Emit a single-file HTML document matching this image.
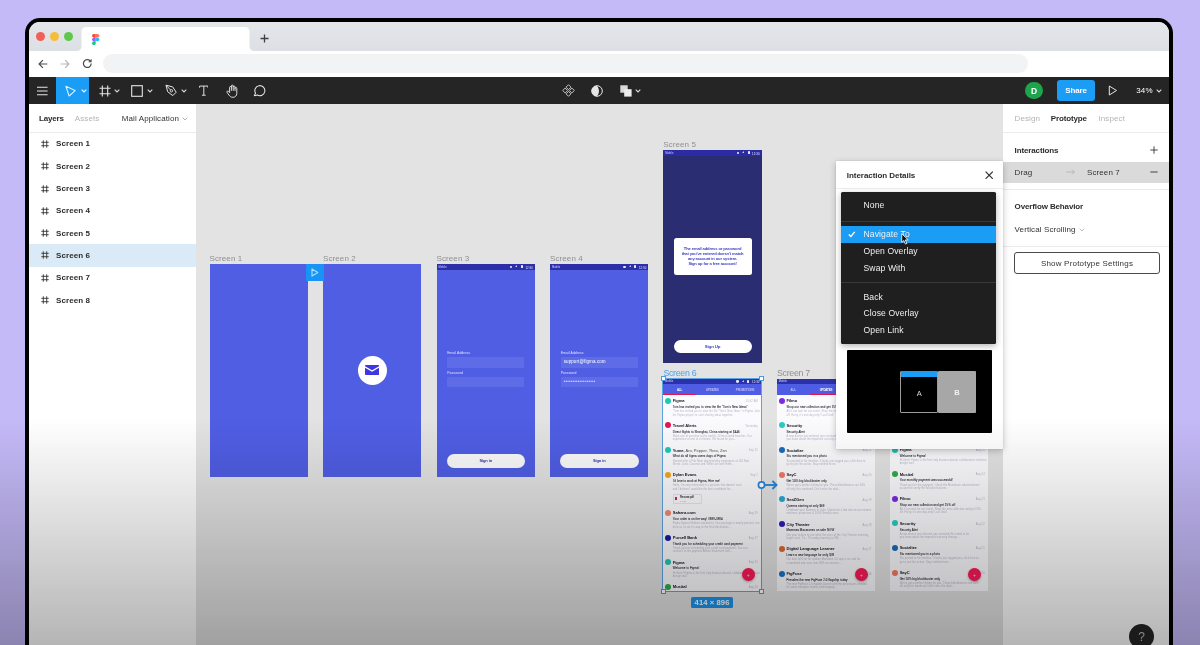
<!DOCTYPE html>
<html lang="en">
<head>
<meta charset="utf-8">
<title>Figma prototype - Mail Application</title>
<style>
*{box-sizing:border-box;margin:0;padding:0}
html,body{width:1200px;height:645px;overflow:hidden;background:#c5baf8}
body{font-family:"Liberation Sans",sans-serif;position:relative;color:#222}
.abs{position:absolute}
.t{position:absolute;white-space:nowrap;line-height:12px;height:12px;margin-top:-5.5px;font-size:8px;color:#333;letter-spacing:0.1px}
.b{font-weight:bold;letter-spacing:-0.13px}
#win{position:absolute;left:25px;top:18px;width:1148px;height:700px;background:#000;border-radius:15px}
#inner{position:absolute;left:3.5px;top:4px;width:1140.5px;height:690px;background:#fff;border-radius:11px 11px 0 0;overflow:hidden}
/* everything inside #app is positioned in page coordinates */
#app{position:absolute;left:-28.5px;top:-22px;width:1200px;height:700px;will-change:transform}
#tabbar{left:28px;top:22px;width:1142px;height:29px;background:linear-gradient(#e4e6ea,#dcdfe4)}
#tab{left:81px;top:27px;width:169px;height:24px;background:#fff;border-radius:5px 5px 0 0}
.tl{position:absolute;top:32.3px;width:9px;height:9px;border-radius:50%}
#addr{left:28px;top:51px;width:1142px;height:26px;background:#fff}
#pill{left:103px;top:54.2px;width:925px;height:18.8px;border-radius:9.5px;background:#f1f3f4}
#toolbar{left:28px;top:76.7px;width:1142px;height:27.8px;background:#252525}
#move{left:55.7px;top:76.7px;width:33.5px;height:27.8px;background:#1b9cf5}
#left{left:28px;top:103px;width:167.5px;height:560px;background:#fff}
#canvas{left:195.5px;top:103px;width:808px;height:560px;background:#e3e3e3}
#right{left:1003px;top:103px;width:167px;height:560px;background:#fff}
.hl{position:absolute;background:#ebebeb;height:1px}
.lay{left:56px;font-weight:bold;color:#2c2c2c;font-size:8px}
.hash{position:absolute;left:40.5px;width:8px;height:8px}
.mi{left:863.500px;color:#f0f0f0;font-size:8.600px;margin-top:-6.200px}
.fl{color:#8f8f8f;font-size:8px}
.frame{position:absolute;overflow:hidden}
#shade{position:absolute;left:0;top:0;width:1200px;height:645px;pointer-events:none;
 background:linear-gradient(to bottom,rgba(0,0,0,0) 0,rgba(0,0,0,0) 418px,rgba(0,0,0,0.29) 645px)}
</style>
</head>
<body>
<div id="win"><div id="inner"><div id="app">

<!-- browser chrome -->
<div id="tabbar" class="abs"></div>
<svg class="abs" style="left:76px;top:27px" width="180" height="24" viewBox="0 0 180 24"><path d="M0 24Q5.500 24 5.500 19V5Q5.500 0 10.500 0H168.500Q173.500 0 173.500 5V19Q173.500 24 179 24z" fill="#fff"/></svg>
<div class="tl" style="left:36px;background:#f0605a"></div>
<div class="tl" style="left:50px;background:#f6bd3b"></div>
<div class="tl" style="left:64px;background:#5ec84d"></div>
<div id="addr" class="abs"></div>
<div id="pill" class="abs"></div>


<!-- panels -->
<div id="left" class="abs"></div>
<div id="canvas" class="abs"></div>
<div id="right" class="abs"></div>

<!-- figma toolbar -->
<div id="toolbar" class="abs"></div>
<div id="move" class="abs"></div>


<div class="abs" style="left:28px;top:244.200px;width:167.500px;height:22.400px;background:#daebf7"></div>
<div class="t b" style="left:38.900px;top:118.400px;color:#2c2c2c;font-size:8px">Layers</div>
<div class="t" style="left:74.800px;top:118.400px;color:#b3b3b3;font-size:8px">Assets</div>
<div class="t" style="left:121.800px;top:118.400px;color:#333;font-size:8px">Mail Application</div>
<svg class="abs" style="left:182.300px;top:117.200px" width="6" height="4" viewBox="0 0 6 4"><path d="M0.700 0.700L3 3l2.300-2.300" stroke="#9a9a9a" stroke-width="0.800" fill="none"/></svg>
<div class="hl" style="left:28px;top:132px;width:167.500px"></div>
<svg class="hash" style="top:139.9px" viewBox="0 0 8 8"><path d="M2.300 0.300v7.400M5.700 0.300v7.400M0.300 2.300h7.400M0.300 5.700h7.400" stroke="#333" stroke-width="0.900" fill="none"/></svg><div class="t lay" style="top:143.9px">Screen 1</div>
<svg class="hash" style="top:162.2px" viewBox="0 0 8 8"><path d="M2.300 0.300v7.400M5.700 0.300v7.400M0.300 2.300h7.400M0.300 5.700h7.400" stroke="#333" stroke-width="0.900" fill="none"/></svg><div class="t lay" style="top:166.2px">Screen 2</div>
<svg class="hash" style="top:184.5px" viewBox="0 0 8 8"><path d="M2.300 0.300v7.400M5.700 0.300v7.400M0.300 2.300h7.400M0.300 5.700h7.400" stroke="#333" stroke-width="0.900" fill="none"/></svg><div class="t lay" style="top:188.5px">Screen 3</div>
<svg class="hash" style="top:206.8px" viewBox="0 0 8 8"><path d="M2.300 0.300v7.400M5.700 0.300v7.400M0.300 2.300h7.400M0.300 5.700h7.400" stroke="#333" stroke-width="0.900" fill="none"/></svg><div class="t lay" style="top:210.8px">Screen 4</div>
<svg class="hash" style="top:229.1px" viewBox="0 0 8 8"><path d="M2.300 0.300v7.400M5.700 0.300v7.400M0.300 2.300h7.400M0.300 5.700h7.400" stroke="#333" stroke-width="0.900" fill="none"/></svg><div class="t lay" style="top:233.1px">Screen 5</div>
<svg class="hash" style="top:251.4px" viewBox="0 0 8 8"><path d="M2.300 0.300v7.400M5.700 0.300v7.400M0.300 2.300h7.400M0.300 5.700h7.400" stroke="#333" stroke-width="0.900" fill="none"/></svg><div class="t lay" style="top:255.4px">Screen 6</div>
<svg class="hash" style="top:273.7px" viewBox="0 0 8 8"><path d="M2.300 0.300v7.400M5.700 0.300v7.400M0.300 2.300h7.400M0.300 5.700h7.400" stroke="#333" stroke-width="0.900" fill="none"/></svg><div class="t lay" style="top:277.7px">Screen 7</div>
<svg class="hash" style="top:296.0px" viewBox="0 0 8 8"><path d="M2.300 0.300v7.400M5.700 0.300v7.400M0.300 2.300h7.400M0.300 5.700h7.400" stroke="#333" stroke-width="0.900" fill="none"/></svg><div class="t lay" style="top:300.0px">Screen 8</div>

<!--CANVAS-->
<div class="t fl" style="left:209.5px;top:258.8px;color:#8f8f8f;font-size:8px">Screen 1</div>
<div class="frame" style="left:209.500px;top:264.200px;width:98.300px;height:213px;background:#505ee4"></div>
<div class="t fl" style="left:323px;top:258.8px;color:#8f8f8f;font-size:8px">Screen 2</div>
<div class="frame" style="left:323px;top:264.200px;width:98.400px;height:213px;background:#505ee4"><div class="abs" style="left:34.500px;top:91.400px;width:29px;height:29px;border-radius:50%;background:#fff"></div><svg class="abs" style="left:41.900px;top:101.200px" width="14.200" height="10" viewBox="0 0 14.200 10"><rect x="0" y="0" width="14.200" height="10" rx="0.800" fill="#3d36e2"/><path d="M-0.200 1.800l7.300 4.300 7.300-4.300" stroke="#fff" stroke-width="1.300" fill="none"/></svg></div>
<div class="abs" style="left:306.300px;top:264.200px;width:17.500px;height:16.800px;background:#1a93f6"></div><svg class="abs" style="left:311.300px;top:268.300px" width="8" height="9" viewBox="0 0 8 9"><path d="M1 0.900l5.800 3.600L1 8.100z" stroke="#9fe4ff" stroke-width="1.150" fill="none" stroke-linejoin="round"/></svg>
<div class="t fl" style="left:436.5px;top:258.8px;color:#8f8f8f;font-size:8px">Screen 3</div>
<div class="frame" style="left:436.5px;top:264.200px;width:98.4px;height:213px;background:#505ee4"><div class="abs" style="left:0;top:0;width:98.4px;height:5.600px;background:#2c2fa6"></div><div class="t" style="left:2px;top:3.400px;font-size:2.600px;color:#d5d8ff;line-height:4px;height:4px;margin-top:-2px">Mobile</div><div class="t" style="left:88.9px;top:3.400px;font-size:2.800px;color:#e8eaff;line-height:4px;height:4px;margin-top:-2px">12:30</div><div class="abs" style="left:73.4px;top:1.500px;width:2.600px;height:2.400px;background:#e8eaff;border-radius:50% 50% 50% 50%/40% 40% 60% 60%"></div><div class="abs" style="left:78.9px;top:1.300px;width:0;height:0;border-left:2.800px solid transparent;border-bottom:2.800px solid #c9ccff"></div><div class="abs" style="left:84.4px;top:1.200px;width:2px;height:3px;background:#e8eaff;border-radius:0.400px"></div><div class="t" style="left:10.7px;top:89px;font-size:3.400px;color:#dfe2ff;line-height:4px;height:4px;margin-top:-2px">Email Address</div><div class="abs" style="left:10.7px;top:92.800px;width:77px;height:10.600px;background:#5f6ce7;border-radius:0.800px"></div><div class="t" style="left:10.7px;top:108.900px;font-size:3.400px;color:#dfe2ff;line-height:4px;height:4px;margin-top:-2px">Password</div><div class="abs" style="left:10.7px;top:113px;width:77px;height:10.200px;background:#5f6ce7;border-radius:0.800px"></div><div class="abs" style="left:10px;top:189.400px;width:78.500px;height:14px;border-radius:7px;background:#fafafa"></div><div class="t b" style="left:10px;top:197.100px;width:78.500px;text-align:center;font-size:4px;color:#2f33a8;line-height:6px;height:6px;margin-top:-3px">Sign in</div></div>
<div class="t fl" style="left:550px;top:258.8px;color:#8f8f8f;font-size:8px">Screen 4</div>
<div class="frame" style="left:550px;top:264.200px;width:98.4px;height:213px;background:#505ee4"><div class="abs" style="left:0;top:0;width:98.4px;height:5.600px;background:#2c2fa6"></div><div class="t" style="left:2px;top:3.400px;font-size:2.600px;color:#d5d8ff;line-height:4px;height:4px;margin-top:-2px">Mobile</div><div class="t" style="left:88.9px;top:3.400px;font-size:2.800px;color:#e8eaff;line-height:4px;height:4px;margin-top:-2px">12:30</div><div class="abs" style="left:73.4px;top:1.500px;width:2.600px;height:2.400px;background:#e8eaff;border-radius:50% 50% 50% 50%/40% 40% 60% 60%"></div><div class="abs" style="left:78.9px;top:1.300px;width:0;height:0;border-left:2.800px solid transparent;border-bottom:2.800px solid #c9ccff"></div><div class="abs" style="left:84.4px;top:1.200px;width:2px;height:3px;background:#e8eaff;border-radius:0.400px"></div><div class="t" style="left:10.7px;top:89px;font-size:3.400px;color:#dfe2ff;line-height:4px;height:4px;margin-top:-2px">Email Address</div><div class="abs" style="left:10.7px;top:92.800px;width:77px;height:10.600px;background:#5f6ce7;border-radius:0.800px"></div><div class="t" style="left:10.7px;top:108.900px;font-size:3.400px;color:#dfe2ff;line-height:4px;height:4px;margin-top:-2px">Password</div><div class="abs" style="left:10.7px;top:113px;width:77px;height:10.200px;background:#5f6ce7;border-radius:0.800px"></div><div class="t" style="left:13.7px;top:98.200px;font-size:4.500px;color:#fff;line-height:6px;height:6px;margin-top:-3px">support@figma.com</div><div class="t" style="left:13.7px;top:118.200px;font-size:2.600px;color:#eef;line-height:4px;height:4px;margin-top:-2px;letter-spacing:0.200px">●●●●●●●●●●●●●●●●●●</div><div class="abs" style="left:10px;top:189.400px;width:78.500px;height:14px;border-radius:7px;background:#fafafa"></div><div class="t b" style="left:10px;top:197.100px;width:78.500px;text-align:center;font-size:4px;color:#2f33a8;line-height:6px;height:6px;margin-top:-3px">Sign in</div></div>
<div class="t fl" style="left:663.2px;top:144.4px;color:#8f8f8f;font-size:8px">Screen 5</div>
<div class="frame" style="left:663.200px;top:150.200px;width:98.400px;height:213px;background:#2a2d72"><div class="abs" style="left:0;top:0;width:98.4px;height:5.600px;background:#2b2ba4"></div><div class="t" style="left:2px;top:3.400px;font-size:2.600px;color:#d5d8ff;line-height:4px;height:4px;margin-top:-2px">Mobile</div><div class="t" style="left:88.9px;top:3.400px;font-size:2.800px;color:#e8eaff;line-height:4px;height:4px;margin-top:-2px">12:30</div><div class="abs" style="left:73.4px;top:1.500px;width:2.600px;height:2.400px;background:#e8eaff;border-radius:50% 50% 50% 50%/40% 40% 60% 60%"></div><div class="abs" style="left:78.9px;top:1.300px;width:0;height:0;border-left:2.800px solid transparent;border-bottom:2.800px solid #c9ccff"></div><div class="abs" style="left:84.4px;top:1.200px;width:2px;height:3px;background:#e8eaff;border-radius:0.400px"></div><div class="abs" style="left:10.400px;top:87.800px;width:78px;height:37.200px;border-radius:2.500px;background:#fff"></div><div class="t b" style="left:10.400px;top:98.90px;width:78px;text-align:center;font-size:4.100px;color:#3c40c4;line-height:6px;height:6px;margin-top:-3px">The email address or password</div><div class="t b" style="left:10.400px;top:103.95px;width:78px;text-align:center;font-size:4.100px;color:#3c40c4;line-height:6px;height:6px;margin-top:-3px">that you've entered doesn't match</div><div class="t b" style="left:10.400px;top:109.00px;width:78px;text-align:center;font-size:4.100px;color:#3c40c4;line-height:6px;height:6px;margin-top:-3px">any account in our system.</div><div class="t b" style="left:10.400px;top:114.05px;width:78px;text-align:center;font-size:4.100px;color:#3c40c4;line-height:6px;height:6px;margin-top:-3px">Sign up for a free account!</div><div class="abs" style="left:10.400px;top:189.600px;width:78px;height:13.700px;border-radius:7px;background:#fff"></div><div class="t b" style="left:10.400px;top:196.500px;width:78px;text-align:center;font-size:4.400px;color:#3c40c4;line-height:6px;height:6px;margin-top:-3px">Sign Up</div></div>
<div class="t fl" style="left:663.4px;top:372.6px;color:#49a2ee;font-size:8.8px;letter-spacing:-0.28px">Screen 6</div>
<div class="frame" style="left:663.100px;top:378.800px;width:98.400px;height:212.500px;background:#fbfbfe"><div class="abs" style="left:0;top:0;width:98.4px;height:5.600px;background:#2b31ab"></div><div class="t" style="left:2px;top:3.400px;font-size:2.600px;color:#d5d8ff;line-height:4px;height:4px;margin-top:-2px">Mobile</div><div class="t" style="left:88.9px;top:3.400px;font-size:2.800px;color:#e8eaff;line-height:4px;height:4px;margin-top:-2px">12:30</div><div class="abs" style="left:73.4px;top:1.500px;width:2.600px;height:2.400px;background:#e8eaff;border-radius:50% 50% 50% 50%/40% 40% 60% 60%"></div><div class="abs" style="left:78.9px;top:1.300px;width:0;height:0;border-left:2.800px solid transparent;border-bottom:2.800px solid #c9ccff"></div><div class="abs" style="left:84.4px;top:1.200px;width:2px;height:3px;background:#e8eaff;border-radius:0.400px"></div><div class="abs" style="left:0;top:5.500px;width:98.4px;height:10.400px;background:#4f5de4"></div><div class="t b" style="left:0.0px;top:10.800px;width:32.8px;text-align:center;font-size:2.900px;color:#fff;line-height:4px;height:4px;margin-top:-2px">ALL</div><div class="t b" style="left:32.8px;top:10.800px;width:32.8px;text-align:center;font-size:2.900px;color:#b9c0ff;line-height:4px;height:4px;margin-top:-2px">UPDATES</div><div class="t b" style="left:65.6px;top:10.800px;width:32.8px;text-align:center;font-size:2.900px;color:#b9c0ff;line-height:4px;height:4px;margin-top:-2px">PROMOTIONS</div><div class="abs" style="left:0.0px;top:15.400px;width:32.8px;height:1.300px;background:#e3174f"></div><div class="abs" style="left:2px;top:19.1px;width:6px;height:6px;border-radius:50%;background:#22c7b4"></div><div class="t b" style="left:9.7px;top:22.6px;font-size:4.1px;color:#16161e;line-height:6px;height:6px;margin-top:-3px;letter-spacing:-0.05px">Figma</div><div class="t" style="right:3.6px;top:23.4px;font-size:2.7px;color:#b7b7c8;line-height:4px;height:4px;margin-top:-2px">10:42 AM</div><div class="t" style="left:9.7px;top:28.2px;font-size:2.9px;color:#1e1e28;line-height:4px;height:4px;margin-top:-2px;-webkit-text-stroke:0.06px #1e1e28">Tom has invited you to view the file "Tom's New Ideas"</div><div class="t" style="left:9.7px;top:33.6px;font-size:2.6px;color:#b4b4c6;line-height:4px;height:4px;margin-top:-2px">"Tom has invited you to view the file "Tom's New Ideas" in Figma. Join</div><div class="t" style="left:9.7px;top:36.8px;font-size:2.6px;color:#b4b4c6;line-height:4px;height:4px;margin-top:-2px">his Figma project to start sharing ideas together.</div><div class="abs" style="left:2px;top:43.7px;width:6px;height:6px;border-radius:50%;background:#e3174f"></div><div class="t b" style="left:9.7px;top:47.2px;font-size:4.1px;color:#16161e;line-height:6px;height:6px;margin-top:-3px;letter-spacing:-0.05px">Travel Alerts</div><div class="t" style="right:3.6px;top:48.0px;font-size:2.7px;color:#b7b7c8;line-height:4px;height:4px;margin-top:-2px">Yesterday</div><div class="t" style="left:9.7px;top:52.8px;font-size:2.9px;color:#1e1e28;line-height:4px;height:4px;margin-top:-2px;-webkit-text-stroke:0.06px #1e1e28">Direct flights to Shanghai, China starting at $446</div><div class="t" style="left:9.7px;top:58.2px;font-size:2.6px;color:#b4b4c6;line-height:4px;height:4px;margin-top:-2px">Make use of vacation to the world's 10 best-loved beaches. Our</div><div class="t" style="left:9.7px;top:61.4px;font-size:2.6px;color:#b4b4c6;line-height:4px;height:4px;margin-top:-2px">experience of one of a lifetime. We found for you...</div><div class="abs" style="left:2px;top:68.3px;width:6px;height:6px;border-radius:50%;background:#22c7b4"></div><div class="t b" style="left:9.7px;top:71.8px;font-size:4.1px;color:#16161e;line-height:6px;height:6px;margin-top:-3px;letter-spacing:-0.05px">Yume,<span style="font-weight:normal;color:#555"> Aro, Pepper, Theo, Zen</span></div><div class="t" style="right:3.6px;top:72.6px;font-size:2.7px;color:#b7b7c8;line-height:4px;height:4px;margin-top:-2px">Sep 21</div><div class="t" style="left:9.7px;top:77.4px;font-size:2.9px;color:#1e1e28;line-height:4px;height:4px;margin-top:-2px;-webkit-text-stroke:0.06px #1e1e28">What do all figma users dogs of Figma</div><div class="t" style="left:9.7px;top:82.8px;font-size:2.6px;color:#b4b4c6;line-height:4px;height:4px;margin-top:-2px">Named after a Fifa Nixie dog breed by employees at 116 New</div><div class="t" style="left:9.7px;top:86.0px;font-size:2.6px;color:#b4b4c6;line-height:4px;height:4px;margin-top:-2px">Street. Juno, Coconut and Toffee are with them...</div><div class="abs" style="left:2px;top:93.1px;width:6px;height:6px;border-radius:50%;background:#f2a71f"></div><div class="t b" style="left:9.7px;top:96.6px;font-size:4.1px;color:#16161e;line-height:6px;height:6px;margin-top:-3px;letter-spacing:-0.05px">Dylan Evans</div><div class="t" style="right:3.6px;top:97.4px;font-size:2.7px;color:#b7b7c8;line-height:4px;height:4px;margin-top:-2px">Sep 2</div><div class="t" style="left:9.7px;top:102.2px;font-size:2.9px;color:#1e1e28;line-height:4px;height:4px;margin-top:-2px;-webkit-text-stroke:0.06px #1e1e28">I'd love to work at Figma, Hire me!</div><div class="t" style="left:9.7px;top:107.6px;font-size:2.6px;color:#b4b4c6;line-height:4px;height:4px;margin-top:-2px">Hello, I'm very interested in a position that doesn't exist</div><div class="t" style="left:9.7px;top:110.8px;font-size:2.6px;color:#b4b4c6;line-height:4px;height:4px;margin-top:-2px">and I believe I would be the best candidate for...</div><div class="abs" style="left:2px;top:131.2px;width:6px;height:6px;border-radius:50%;background:#f08a6c"></div><div class="t b" style="left:9.7px;top:134.7px;font-size:4.1px;color:#16161e;line-height:6px;height:6px;margin-top:-3px;letter-spacing:-0.05px">Sahara.com</div><div class="t" style="right:3.6px;top:135.5px;font-size:2.7px;color:#b7b7c8;line-height:4px;height:4px;margin-top:-2px">Aug 29</div><div class="t" style="left:9.7px;top:140.3px;font-size:2.9px;color:#1e1e28;line-height:4px;height:4px;margin-top:-2px;-webkit-text-stroke:0.06px #1e1e28">Your order is on the way! #889-3894</div><div class="t" style="left:9.7px;top:145.7px;font-size:2.6px;color:#b4b4c6;line-height:4px;height:4px;margin-top:-2px">Figma Special Edition sweatshirt, Your package is nearly present, see</div><div class="t" style="left:9.7px;top:148.9px;font-size:2.6px;color:#b4b4c6;line-height:4px;height:4px;margin-top:-2px">here as it's on it's way to the final destination...</div><div class="abs" style="left:2px;top:155.9px;width:6px;height:6px;border-radius:50%;background:#1b1ba6"></div><div class="t b" style="left:9.7px;top:159.4px;font-size:4.1px;color:#16161e;line-height:6px;height:6px;margin-top:-3px;letter-spacing:-0.05px">Purcell Bank</div><div class="t" style="right:3.6px;top:160.2px;font-size:2.7px;color:#b7b7c8;line-height:4px;height:4px;margin-top:-2px">Aug 27</div><div class="t" style="left:9.7px;top:165.0px;font-size:2.9px;color:#1e1e28;line-height:4px;height:4px;margin-top:-2px;-webkit-text-stroke:0.06px #1e1e28">Thank you for scheduling your credit card payment</div><div class="t" style="left:9.7px;top:170.4px;font-size:2.6px;color:#b4b4c6;line-height:4px;height:4px;margin-top:-2px">Thank you for scheduling your credit card payment. You can</div><div class="t" style="left:9.7px;top:173.6px;font-size:2.6px;color:#b4b4c6;line-height:4px;height:4px;margin-top:-2px">review it in the payment Active Statement tool...</div><div class="abs" style="left:2px;top:180.4px;width:6px;height:6px;border-radius:50%;background:#22c7b4"></div><div class="t b" style="left:9.7px;top:183.9px;font-size:4.1px;color:#16161e;line-height:6px;height:6px;margin-top:-3px;letter-spacing:-0.05px">Figma</div><div class="t" style="right:3.6px;top:184.7px;font-size:2.7px;color:#b7b7c8;line-height:4px;height:4px;margin-top:-2px">Aug 25</div><div class="t" style="left:9.7px;top:189.5px;font-size:2.9px;color:#1e1e28;line-height:4px;height:4px;margin-top:-2px;-webkit-text-stroke:0.06px #1e1e28">Welcome to Figma!</div><div class="t" style="left:9.7px;top:194.9px;font-size:2.6px;color:#b4b4c6;line-height:4px;height:4px;margin-top:-2px">Hi there! Figma is the first truly browser-based, collaborative interface</div><div class="t" style="left:9.7px;top:198.1px;font-size:2.6px;color:#b4b4c6;line-height:4px;height:4px;margin-top:-2px">design tool.</div><div class="abs" style="left:2px;top:205.2px;width:6px;height:6px;border-radius:50%;background:#2fac48"></div><div class="t b" style="left:9.7px;top:208.7px;font-size:4.1px;color:#16161e;line-height:6px;height:6px;margin-top:-3px;letter-spacing:-0.05px">Musital</div><div class="t" style="right:3.6px;top:209.5px;font-size:2.7px;color:#b7b7c8;line-height:4px;height:4px;margin-top:-2px">Aug 24</div><div class="t" style="left:9.7px;top:214.3px;font-size:2.9px;color:#1e1e28;line-height:4px;height:4px;margin-top:-2px;-webkit-text-stroke:0.06px #1e1e28">Your monthly payment was successful!</div><div class="t" style="left:9.7px;top:219.7px;font-size:2.6px;color:#b4b4c6;line-height:4px;height:4px;margin-top:-2px">Thank you for the payment. Check the Musimusic advertisement</div><div class="t" style="left:9.7px;top:222.9px;font-size:2.6px;color:#b4b4c6;line-height:4px;height:4px;margin-top:-2px">account to verify the full plan features.</div><div class="abs" style="left:9.700px;top:115.600px;width:29px;height:9.600px;border-radius:1px;background:#fafafd;border:0.400px solid #e3e3ee"></div><div class="abs" style="left:12.200px;top:118.600px;width:2.200px;height:3px;background:#e3174f;border-radius:0.300px"></div><div class="t b" style="left:17px;top:119px;font-size:2.600px;color:#333;line-height:4px;height:4px;margin-top:-2px">Resume.pdf</div><div class="t" style="left:17px;top:122px;font-size:2.300px;color:#aaa;line-height:4px;height:4px;margin-top:-2px">1 MB</div><div class="abs" style="left:78.5px;top:189.300px;width:13.400px;height:13.400px;border-radius:50%;background:#fb1a58;box-shadow:0 1px 2.5px rgba(0,0,0,0.3)"></div><div class="t" style="left:78.5px;top:196px;width:13.400px;text-align:center;font-size:5px;color:#ffd0dc;line-height:6px;height:6px;margin-top:-3px">+</div></div>
<div class="t fl" style="left:777px;top:372.6px;color:#8f8f8f;font-size:8.8px;letter-spacing:-0.28px">Screen 7</div>
<div class="frame" style="left:776.800px;top:378.800px;width:98.400px;height:212.500px;background:#fbfbfe"><div class="abs" style="left:0;top:0;width:98.4px;height:5.600px;background:#2b31ab"></div><div class="t" style="left:2px;top:3.400px;font-size:2.600px;color:#d5d8ff;line-height:4px;height:4px;margin-top:-2px">Mobile</div><div class="t" style="left:88.9px;top:3.400px;font-size:2.800px;color:#e8eaff;line-height:4px;height:4px;margin-top:-2px">12:30</div><div class="abs" style="left:73.4px;top:1.500px;width:2.600px;height:2.400px;background:#e8eaff;border-radius:50% 50% 50% 50%/40% 40% 60% 60%"></div><div class="abs" style="left:78.9px;top:1.300px;width:0;height:0;border-left:2.800px solid transparent;border-bottom:2.800px solid #c9ccff"></div><div class="abs" style="left:84.4px;top:1.200px;width:2px;height:3px;background:#e8eaff;border-radius:0.400px"></div><div class="abs" style="left:0;top:5.500px;width:98.4px;height:10.400px;background:#4f5de4"></div><div class="t b" style="left:0.0px;top:10.800px;width:32.8px;text-align:center;font-size:2.900px;color:#b9c0ff;line-height:4px;height:4px;margin-top:-2px">ALL</div><div class="t b" style="left:32.8px;top:10.800px;width:32.8px;text-align:center;font-size:2.900px;color:#fff;line-height:4px;height:4px;margin-top:-2px">UPDATES</div><div class="t b" style="left:65.6px;top:10.800px;width:32.8px;text-align:center;font-size:2.900px;color:#b9c0ff;line-height:4px;height:4px;margin-top:-2px">PROMOTIONS</div><div class="abs" style="left:32.8px;top:15.400px;width:32.8px;height:1.300px;background:#e3174f"></div><div class="abs" style="left:2px;top:19.1px;width:6px;height:6px;border-radius:50%;background:#7b2be0"></div><div class="t b" style="left:9.7px;top:22.6px;font-size:4.1px;color:#16161e;line-height:6px;height:6px;margin-top:-3px;letter-spacing:-0.05px">Filmo</div><div class="t" style="right:3.6px;top:23.4px;font-size:2.7px;color:#b7b7c8;line-height:4px;height:4px;margin-top:-2px">Aug 23</div><div class="t" style="left:9.7px;top:28.2px;font-size:2.9px;color:#1e1e28;line-height:4px;height:4px;margin-top:-2px;-webkit-text-stroke:0.06px #1e1e28">Shop our new collection and get 15% off</div><div class="t" style="left:9.7px;top:33.6px;font-size:2.6px;color:#b4b4c6;line-height:4px;height:4px;margin-top:-2px">All it can wait for our event. Shop the new collection and get 15%</div><div class="t" style="left:9.7px;top:36.8px;font-size:2.6px;color:#b4b4c6;line-height:4px;height:4px;margin-top:-2px">off. Hurry, it's one day only! Last Deal!</div><div class="abs" style="left:2px;top:43.7px;width:6px;height:6px;border-radius:50%;background:#2ccbc2"></div><div class="t b" style="left:9.7px;top:47.2px;font-size:4.1px;color:#16161e;line-height:6px;height:6px;margin-top:-3px;letter-spacing:-0.05px">Security</div><div class="t" style="right:3.6px;top:48.0px;font-size:2.7px;color:#b7b7c8;line-height:4px;height:4px;margin-top:-2px">Aug 22</div><div class="t" style="left:9.7px;top:52.8px;font-size:2.9px;color:#1e1e28;line-height:4px;height:4px;margin-top:-2px;-webkit-text-stroke:0.06px #1e1e28">Security Alert</div><div class="t" style="left:9.7px;top:58.2px;font-size:2.6px;color:#b4b4c6;line-height:4px;height:4px;margin-top:-2px">A new device just entered, you received this email to let</div><div class="t" style="left:9.7px;top:61.4px;font-size:2.6px;color:#b4b4c6;line-height:4px;height:4px;margin-top:-2px">you know about the important security change...</div><div class="abs" style="left:2px;top:68.3px;width:6px;height:6px;border-radius:50%;background:#1c6bbd"></div><div class="t b" style="left:9.7px;top:71.8px;font-size:4.1px;color:#16161e;line-height:6px;height:6px;margin-top:-3px;letter-spacing:-0.05px">Socialize</div><div class="t" style="right:3.6px;top:72.6px;font-size:2.7px;color:#b7b7c8;line-height:4px;height:4px;margin-top:-2px">Aug 21</div><div class="t" style="left:9.7px;top:77.4px;font-size:2.9px;color:#1e1e28;line-height:4px;height:4px;margin-top:-2px;-webkit-text-stroke:0.06px #1e1e28">Stu mentioned you in a photo</div><div class="t" style="left:9.7px;top:82.8px;font-size:2.6px;color:#b4b4c6;line-height:4px;height:4px;margin-top:-2px">Stu posted to his timeline. It looks just tagged you, click here to</div><div class="t" style="left:9.7px;top:86.0px;font-size:2.6px;color:#b4b4c6;line-height:4px;height:4px;margin-top:-2px">go to join the action. Stay notified more.</div><div class="abs" style="left:2px;top:93.1px;width:6px;height:6px;border-radius:50%;background:#f27a62"></div><div class="t b" style="left:9.7px;top:96.6px;font-size:4.1px;color:#16161e;line-height:6px;height:6px;margin-top:-3px;letter-spacing:-0.05px">SayC</div><div class="t" style="right:3.6px;top:97.4px;font-size:2.7px;color:#b7b7c8;line-height:4px;height:4px;margin-top:-2px">Aug 20</div><div class="t" style="left:9.7px;top:102.2px;font-size:2.9px;color:#1e1e28;line-height:4px;height:4px;margin-top:-2px;-webkit-text-stroke:0.06px #1e1e28">Get 10% big blockbuster only</div><div class="t" style="left:9.7px;top:107.6px;font-size:2.6px;color:#b4b4c6;line-height:4px;height:4px;margin-top:-2px">We've got a perfect listing for you. These blockbusters are 10%</div><div class="t" style="left:9.7px;top:110.8px;font-size:2.6px;color:#b4b4c6;line-height:4px;height:4px;margin-top:-2px">off only this weekend. Don't miss the deal...</div><div class="abs" style="left:2px;top:117.7px;width:6px;height:6px;border-radius:50%;background:#2aa9d6"></div><div class="t b" style="left:9.7px;top:121.2px;font-size:4.1px;color:#16161e;line-height:6px;height:6px;margin-top:-3px;letter-spacing:-0.05px">SeaZGen</div><div class="t" style="right:3.6px;top:122.0px;font-size:2.7px;color:#b7b7c8;line-height:4px;height:4px;margin-top:-2px">Aug 19</div><div class="t" style="left:9.7px;top:126.8px;font-size:2.9px;color:#1e1e28;line-height:4px;height:4px;margin-top:-2px;-webkit-text-stroke:0.06px #1e1e28">Queens starting at only $69</div><div class="t" style="left:9.7px;top:132.2px;font-size:2.6px;color:#b4b4c6;line-height:4px;height:4px;margin-top:-2px">Celebrate your Summer in style. Queen for a low rate on our newest</div><div class="t" style="left:9.7px;top:135.4px;font-size:2.6px;color:#b4b4c6;line-height:4px;height:4px;margin-top:-2px">mattress, protectors & 100% thread count...</div><div class="abs" style="left:2px;top:142.5px;width:6px;height:6px;border-radius:50%;background:#2c1cb4"></div><div class="t b" style="left:9.7px;top:146.0px;font-size:4.1px;color:#16161e;line-height:6px;height:6px;margin-top:-3px;letter-spacing:-0.05px">City Theater</div><div class="t" style="right:3.6px;top:146.8px;font-size:2.7px;color:#b7b7c8;line-height:4px;height:4px;margin-top:-2px">Aug 18</div><div class="t" style="left:9.7px;top:151.6px;font-size:2.9px;color:#1e1e28;line-height:4px;height:4px;margin-top:-2px;-webkit-text-stroke:0.06px #1e1e28">Mammas Macarones on sale NOW</div><div class="t" style="left:9.7px;top:157.0px;font-size:2.6px;color:#b4b4c6;line-height:4px;height:4px;margin-top:-2px">Get your tickets to see what the stars of the City Theater stunning,</div><div class="t" style="left:9.7px;top:160.2px;font-size:2.6px;color:#b4b4c6;line-height:4px;height:4px;margin-top:-2px">large casts. Tix - Thursday morning at 9M...</div><div class="abs" style="left:2px;top:167.2px;width:6px;height:6px;border-radius:50%;background:#dc6a30"></div><div class="t b" style="left:9.7px;top:170.7px;font-size:4.1px;color:#16161e;line-height:6px;height:6px;margin-top:-3px;letter-spacing:-0.05px">Digital Language Learner</div><div class="t" style="right:3.6px;top:171.5px;font-size:2.7px;color:#b7b7c8;line-height:4px;height:4px;margin-top:-2px">Aug 17</div><div class="t" style="left:9.7px;top:176.3px;font-size:2.9px;color:#1e1e28;line-height:4px;height:4px;margin-top:-2px;-webkit-text-stroke:0.06px #1e1e28">Learn a new language for only $39</div><div class="t" style="left:9.7px;top:181.7px;font-size:2.6px;color:#b4b4c6;line-height:4px;height:4px;margin-top:-2px">Our best full line for spoken Mandarin 4.0 app is on sale for</div><div class="t" style="left:9.7px;top:184.9px;font-size:2.6px;color:#b4b4c6;line-height:4px;height:4px;margin-top:-2px">a weekend and save over 80% on courses...</div><div class="abs" style="left:2px;top:192.0px;width:6px;height:6px;border-radius:50%;background:#1c72c4"></div><div class="t b" style="left:9.7px;top:195.5px;font-size:4.1px;color:#16161e;line-height:6px;height:6px;margin-top:-3px;letter-spacing:-0.05px">FigFuse</div><div class="t" style="right:3.6px;top:196.3px;font-size:2.7px;color:#b7b7c8;line-height:4px;height:4px;margin-top:-2px">Aug 16</div><div class="t" style="left:9.7px;top:201.1px;font-size:2.9px;color:#1e1e28;line-height:4px;height:4px;margin-top:-2px;-webkit-text-stroke:0.06px #1e1e28">Presales the new FigFuse 2.0 flagship today</div><div class="t" style="left:9.7px;top:206.5px;font-size:2.6px;color:#b4b4c6;line-height:4px;height:4px;margin-top:-2px">The new FigFuse 2.0 models launch with the processors needed</div><div class="t" style="left:9.7px;top:209.7px;font-size:2.6px;color:#b4b4c6;line-height:4px;height:4px;margin-top:-2px">for some marquee results and imagery...</div><div class="abs" style="left:78.0px;top:189.300px;width:13.400px;height:13.400px;border-radius:50%;background:#fb1a58;box-shadow:0 1px 2.5px rgba(0,0,0,0.3)"></div><div class="t" style="left:78.0px;top:196px;width:13.400px;text-align:center;font-size:5px;color:#ffd0dc;line-height:6px;height:6px;margin-top:-3px">+</div></div>
<div class="frame" style="left:890px;top:378.800px;width:98.400px;height:212.500px;background:#fbfbfe"><div class="abs" style="left:0;top:0;width:98.4px;height:5.600px;background:#2b31ab"></div><div class="t" style="left:2px;top:3.400px;font-size:2.600px;color:#d5d8ff;line-height:4px;height:4px;margin-top:-2px">Mobile</div><div class="t" style="left:88.9px;top:3.400px;font-size:2.800px;color:#e8eaff;line-height:4px;height:4px;margin-top:-2px">12:30</div><div class="abs" style="left:73.4px;top:1.500px;width:2.600px;height:2.400px;background:#e8eaff;border-radius:50% 50% 50% 50%/40% 40% 60% 60%"></div><div class="abs" style="left:78.9px;top:1.300px;width:0;height:0;border-left:2.800px solid transparent;border-bottom:2.800px solid #c9ccff"></div><div class="abs" style="left:84.4px;top:1.200px;width:2px;height:3px;background:#e8eaff;border-radius:0.400px"></div><div class="abs" style="left:0;top:5.500px;width:98.4px;height:10.400px;background:#4f5de4"></div><div class="t b" style="left:0.0px;top:10.800px;width:32.8px;text-align:center;font-size:2.900px;color:#b9c0ff;line-height:4px;height:4px;margin-top:-2px">ALL</div><div class="t b" style="left:32.8px;top:10.800px;width:32.8px;text-align:center;font-size:2.900px;color:#b9c0ff;line-height:4px;height:4px;margin-top:-2px">UPDATES</div><div class="t b" style="left:65.6px;top:10.800px;width:32.8px;text-align:center;font-size:2.900px;color:#fff;line-height:4px;height:4px;margin-top:-2px">PROMOTIONS</div><div class="abs" style="left:65.6px;top:15.400px;width:32.8px;height:1.300px;background:#e3174f"></div><div class="abs" style="left:2px;top:19.1px;width:6px;height:6px;border-radius:50%;background:#22c7b4"></div><div class="t b" style="left:9.7px;top:22.6px;font-size:4.1px;color:#16161e;line-height:6px;height:6px;margin-top:-3px;letter-spacing:-0.05px">Figma</div><div class="t" style="right:3.6px;top:23.4px;font-size:2.7px;color:#b7b7c8;line-height:4px;height:4px;margin-top:-2px">10:42 AM</div><div class="t" style="left:9.7px;top:28.2px;font-size:2.9px;color:#1e1e28;line-height:4px;height:4px;margin-top:-2px;-webkit-text-stroke:0.06px #1e1e28">Tom has invited you to view the file "Tom's New Ideas"</div><div class="t" style="left:9.7px;top:33.6px;font-size:2.6px;color:#b4b4c6;line-height:4px;height:4px;margin-top:-2px">"Tom has invited you to view the file "Tom's New Ideas" in Figma. Join</div><div class="t" style="left:9.7px;top:36.8px;font-size:2.6px;color:#b4b4c6;line-height:4px;height:4px;margin-top:-2px">his Figma project to start sharing ideas together.</div><div class="abs" style="left:2px;top:43.2px;width:6px;height:6px;border-radius:50%;background:#e3174f"></div><div class="t b" style="left:9.7px;top:46.7px;font-size:4.1px;color:#16161e;line-height:6px;height:6px;margin-top:-3px;letter-spacing:-0.05px">Travel Alerts</div><div class="t" style="right:3.6px;top:47.5px;font-size:2.7px;color:#b7b7c8;line-height:4px;height:4px;margin-top:-2px">Yesterday</div><div class="t" style="left:9.7px;top:52.3px;font-size:2.9px;color:#1e1e28;line-height:4px;height:4px;margin-top:-2px;-webkit-text-stroke:0.06px #1e1e28">Direct flights to Shanghai, China starting at $446</div><div class="t" style="left:9.7px;top:57.7px;font-size:2.6px;color:#b4b4c6;line-height:4px;height:4px;margin-top:-2px">Make use of vacation to the world's 10 best-loved beaches. Our</div><div class="t" style="left:9.7px;top:60.9px;font-size:2.6px;color:#b4b4c6;line-height:4px;height:4px;margin-top:-2px">experience of one of a lifetime. We found for you...</div><div class="abs" style="left:2px;top:67.8px;width:6px;height:6px;border-radius:50%;background:#22c7b4"></div><div class="t b" style="left:9.7px;top:71.3px;font-size:4.1px;color:#16161e;line-height:6px;height:6px;margin-top:-3px;letter-spacing:-0.05px">Figma</div><div class="t" style="right:3.6px;top:72.1px;font-size:2.7px;color:#b7b7c8;line-height:4px;height:4px;margin-top:-2px">Aug 25</div><div class="t" style="left:9.7px;top:76.9px;font-size:2.9px;color:#1e1e28;line-height:4px;height:4px;margin-top:-2px;-webkit-text-stroke:0.06px #1e1e28">Welcome to Figma!</div><div class="t" style="left:9.7px;top:82.3px;font-size:2.6px;color:#b4b4c6;line-height:4px;height:4px;margin-top:-2px">Hi there! Figma is the first truly browser-based, collaborative interface</div><div class="t" style="left:9.7px;top:85.5px;font-size:2.6px;color:#b4b4c6;line-height:4px;height:4px;margin-top:-2px">design tool.</div><div class="abs" style="left:2px;top:92.4px;width:6px;height:6px;border-radius:50%;background:#2fac48"></div><div class="t b" style="left:9.7px;top:95.9px;font-size:4.1px;color:#16161e;line-height:6px;height:6px;margin-top:-3px;letter-spacing:-0.05px">Musital</div><div class="t" style="right:3.6px;top:96.7px;font-size:2.7px;color:#b7b7c8;line-height:4px;height:4px;margin-top:-2px">Aug 24</div><div class="t" style="left:9.7px;top:101.5px;font-size:2.9px;color:#1e1e28;line-height:4px;height:4px;margin-top:-2px;-webkit-text-stroke:0.06px #1e1e28">Your monthly payment was successful!</div><div class="t" style="left:9.7px;top:106.9px;font-size:2.6px;color:#b4b4c6;line-height:4px;height:4px;margin-top:-2px">Thank you for the payment. Check the Musimusic advertisement</div><div class="t" style="left:9.7px;top:110.1px;font-size:2.6px;color:#b4b4c6;line-height:4px;height:4px;margin-top:-2px">account to verify the full plan features.</div><div class="abs" style="left:2px;top:117.0px;width:6px;height:6px;border-radius:50%;background:#7b2be0"></div><div class="t b" style="left:9.7px;top:120.5px;font-size:4.1px;color:#16161e;line-height:6px;height:6px;margin-top:-3px;letter-spacing:-0.05px">Filmo</div><div class="t" style="right:3.6px;top:121.3px;font-size:2.7px;color:#b7b7c8;line-height:4px;height:4px;margin-top:-2px">Aug 23</div><div class="t" style="left:9.7px;top:126.1px;font-size:2.9px;color:#1e1e28;line-height:4px;height:4px;margin-top:-2px;-webkit-text-stroke:0.06px #1e1e28">Shop our new collection and get 15% off</div><div class="t" style="left:9.7px;top:131.5px;font-size:2.6px;color:#b4b4c6;line-height:4px;height:4px;margin-top:-2px">All it can wait for our event. Shop the new collection and get 15%</div><div class="t" style="left:9.7px;top:134.7px;font-size:2.6px;color:#b4b4c6;line-height:4px;height:4px;margin-top:-2px">off. Hurry, it's one day only! Last Deal!</div><div class="abs" style="left:2px;top:141.7px;width:6px;height:6px;border-radius:50%;background:#2ccbc2"></div><div class="t b" style="left:9.7px;top:145.2px;font-size:4.1px;color:#16161e;line-height:6px;height:6px;margin-top:-3px;letter-spacing:-0.05px">Security</div><div class="t" style="right:3.6px;top:146.0px;font-size:2.7px;color:#b7b7c8;line-height:4px;height:4px;margin-top:-2px">Aug 22</div><div class="t" style="left:9.7px;top:150.8px;font-size:2.9px;color:#1e1e28;line-height:4px;height:4px;margin-top:-2px;-webkit-text-stroke:0.06px #1e1e28">Security Alert</div><div class="t" style="left:9.7px;top:156.2px;font-size:2.6px;color:#b4b4c6;line-height:4px;height:4px;margin-top:-2px">A new device just entered, you received this email to let</div><div class="t" style="left:9.7px;top:159.4px;font-size:2.6px;color:#b4b4c6;line-height:4px;height:4px;margin-top:-2px">you know about the important security change...</div><div class="abs" style="left:2px;top:166.2px;width:6px;height:6px;border-radius:50%;background:#1c6bbd"></div><div class="t b" style="left:9.7px;top:169.7px;font-size:4.1px;color:#16161e;line-height:6px;height:6px;margin-top:-3px;letter-spacing:-0.05px">Socialize</div><div class="t" style="right:3.6px;top:170.5px;font-size:2.7px;color:#b7b7c8;line-height:4px;height:4px;margin-top:-2px">Aug 21</div><div class="t" style="left:9.7px;top:175.3px;font-size:2.9px;color:#1e1e28;line-height:4px;height:4px;margin-top:-2px;-webkit-text-stroke:0.06px #1e1e28">Stu mentioned you in a photo</div><div class="t" style="left:9.7px;top:180.7px;font-size:2.6px;color:#b4b4c6;line-height:4px;height:4px;margin-top:-2px">Stu posted to his timeline. It looks just tagged you, click here to</div><div class="t" style="left:9.7px;top:183.9px;font-size:2.6px;color:#b4b4c6;line-height:4px;height:4px;margin-top:-2px">go to join the action. Stay notified more.</div><div class="abs" style="left:2px;top:191.0px;width:6px;height:6px;border-radius:50%;background:#f27a62"></div><div class="t b" style="left:9.7px;top:194.5px;font-size:4.1px;color:#16161e;line-height:6px;height:6px;margin-top:-3px;letter-spacing:-0.05px">SayC</div><div class="t" style="right:3.6px;top:195.3px;font-size:2.7px;color:#b7b7c8;line-height:4px;height:4px;margin-top:-2px">Aug 20</div><div class="t" style="left:9.7px;top:200.1px;font-size:2.9px;color:#1e1e28;line-height:4px;height:4px;margin-top:-2px;-webkit-text-stroke:0.06px #1e1e28">Get 10% big blockbuster only</div><div class="t" style="left:9.7px;top:205.5px;font-size:2.6px;color:#b4b4c6;line-height:4px;height:4px;margin-top:-2px">We've got a perfect listing for you. These blockbusters are 10%</div><div class="t" style="left:9.7px;top:208.7px;font-size:2.6px;color:#b4b4c6;line-height:4px;height:4px;margin-top:-2px">off only this weekend. Don't miss the deal...</div><div class="abs" style="left:77.8px;top:189.300px;width:13.400px;height:13.400px;border-radius:50%;background:#fb1a58;box-shadow:0 1px 2.5px rgba(0,0,0,0.3)"></div><div class="t" style="left:77.8px;top:196px;width:13.400px;text-align:center;font-size:5px;color:#ffd0dc;line-height:6px;height:6px;margin-top:-3px">+</div></div>
<div class="abs" style="left:662.300px;top:378px;width:100px;height:214.100px;border:1.500px solid #5fa2df"></div>
<div class="abs" style="left:660.5px;top:376.2px;width:5.200px;height:5.200px;background:#fff;border:0.900px solid #4a9be0"></div>
<div class="abs" style="left:758.9px;top:376.2px;width:5.200px;height:5.200px;background:#fff;border:0.900px solid #4a9be0"></div>
<div class="abs" style="left:660.5px;top:588.7px;width:5.200px;height:5.200px;background:#fff;border:0.900px solid #4a9be0"></div>
<div class="abs" style="left:758.9px;top:588.7px;width:5.200px;height:5.200px;background:#fff;border:0.900px solid #4a9be0"></div>
<svg class="abs" style="left:756px;top:478.800px" width="24" height="12" viewBox="0 0 24 12"><path d="M8 6h12" stroke="#2a86d8" stroke-width="1.900" fill="none"/><path d="M16.400 2L20.600 6l-4.200 4" stroke="#2a86d8" stroke-width="1.800" fill="none"/><circle cx="5.500" cy="6" r="3.100" fill="#fff" stroke="#2a86d8" stroke-width="1.700"/></svg>
<div class="abs" style="left:691.200px;top:597.200px;width:41.700px;height:10.800px;border-radius:1.500px;background:#1f95ec"></div>
<div class="t b" style="left:691.200px;top:602.700px;width:41.700px;text-align:center;font-size:7.600px;color:#fff;letter-spacing:0.100px">414 × 896</div>
<!--/CANVAS-->

<div class="t" style="left:1014.600px;top:118.400px;color:#b3b3b3">Design</div>
<div class="t b" style="left:1050.800px;top:118.400px;color:#2c2c2c;letter-spacing:-0.150px">Prototype</div>
<div class="t" style="left:1098.500px;top:118.400px;color:#b3b3b3">Inspect</div>
<div class="hl" style="left:1003px;top:132px;width:167px"></div>
<div class="t b" style="left:1014.600px;top:150px;color:#2c2c2c">Interactions</div>
<svg class="abs" style="left:1149.800px;top:145.700px" width="8" height="8" viewBox="0 0 8 8"><path d="M4 0.300v7.400M0.300 4h7.400" stroke="#333" stroke-width="0.900" fill="none"/></svg>
<div class="abs" style="left:1003px;top:161.500px;width:167px;height:21.200px;background:#dadada"></div>
<div class="t" style="left:1014.600px;top:172.400px;color:#333">Drag</div>
<svg class="abs" style="left:1066px;top:169.400px" width="9" height="6" viewBox="0 0 9 6"><path d="M0.300 3h8M6 0.600L8.400 3 6 5.400" stroke="#b0b0b0" stroke-width="0.800" fill="none"/></svg>
<div class="t" style="left:1087px;top:172.400px;color:#333">Screen 7</div>
<svg class="abs" style="left:1149.800px;top:168.400px" width="8" height="8" viewBox="0 0 8 8"><path d="M0.300 4h7.400" stroke="#333" stroke-width="0.900" fill="none"/></svg>
<div class="hl" style="left:1003px;top:189.300px;width:167px"></div>
<div class="t b" style="left:1014.600px;top:206.600px;color:#2c2c2c">Overflow Behavior</div>
<div class="t" style="left:1014.600px;top:229px;color:#333">Vertical Scrolling</div>
<svg class="abs" style="left:1078.500px;top:227.700px" width="6" height="4" viewBox="0 0 6 4"><path d="M0.700 0.700L3 3l2.300-2.300" stroke="#b0b0b0" stroke-width="0.800" fill="none"/></svg>
<div class="hl" style="left:1003px;top:245.500px;width:167px"></div>
<div class="abs" style="left:1014.300px;top:252.300px;width:145.400px;height:21.400px;border:1px solid #4a4a4a;border-radius:3px;background:#fff"></div>
<div class="t" style="left:1014.300px;top:263.200px;width:145.400px;text-align:center;color:#333;letter-spacing:0.2px">Show Prototype Settings</div>
<!-- help -->
<div class="abs" style="left:1129px;top:623.700px;width:25.200px;height:25.200px;border-radius:50%;background:#262626"></div>
<div class="t" style="left:1129px;top:636.800px;width:25.200px;text-align:center;color:#bdbdbd;font-size:12px">?</div>


<div class="abs" style="left:836.200px;top:161.400px;width:166.800px;height:287.200px;background:#fff;box-shadow:0 2px 7px rgba(0,0,0,0.220),0 0 1px rgba(0,0,0,0.200)"></div>
<div class="t b" style="left:846.800px;top:175.200px;color:#2c2c2c;letter-spacing:-0.050px">Interaction Details</div>
<svg class="abs" style="left:985px;top:171.100px" width="8.400" height="8.400" viewBox="0 0 8.400 8.400"><path d="M0.600 0.600l7.200 7.200M7.800 0.600L0.600 7.800" stroke="#2a2a2a" stroke-width="1.150" fill="none"/></svg>
<div class="hl" style="left:836.200px;top:188px;width:166.800px;background:#ededed"></div>
<!-- dropdown menu -->
<div class="abs" style="left:841.300px;top:191.900px;width:154.600px;height:152px;background:#1f1f1f;border-radius:1.500px;box-shadow:0 2px 6px rgba(0,0,0,0.300)"></div>
<div class="t mi" style="top:205.600px">None</div>
<div class="abs" style="left:841.300px;top:220.800px;width:154.600px;height:1px;background:#383838"></div>
<div class="abs" style="left:841.300px;top:226.200px;width:154.600px;height:16.400px;background:#1b9cf5"></div>
<svg class="abs" style="left:848.300px;top:231px" width="7.500" height="6.500" viewBox="0 0 7.500 6.500"><path d="M0.800 3.400l2.100 2L6.700 0.900" stroke="#fff" stroke-width="1.400" fill="none"/></svg>
<div class="t mi" style="top:234.400px">Navigate To</div>
<div class="t mi" style="top:251.300px">Open Overlay</div>
<div class="t mi" style="top:267.700px">Swap With</div>
<div class="abs" style="left:841.300px;top:282.300px;width:154.600px;height:1px;background:#383838"></div>
<div class="t mi" style="top:296.700px">Back</div>
<div class="t mi" style="top:313.200px">Close Overlay</div>
<div class="t mi" style="top:330px">Open Link</div>
<!-- animation preview -->
<div class="abs" style="left:846.800px;top:349.800px;width:145.200px;height:83.700px;background:#000;border-radius:1px"></div>
<div class="abs" style="left:937.800px;top:370.700px;width:38.200px;height:41.900px;background:#a7a7a7;border-radius:1px"></div>
<div class="abs" style="left:900.400px;top:370.700px;width:37.600px;height:41.900px;background:#000;border:0.800px solid #9c9c9c;border-radius:1px"></div>
<div class="abs" style="left:901.200px;top:371.400px;width:36px;height:5.300px;background:#1b9cf5"></div>
<div class="t" style="left:900.400px;top:393px;width:37.600px;text-align:center;color:#d8d8d8;font-size:7.500px">A</div>
<div class="t b" style="left:937.800px;top:392.200px;width:38.200px;text-align:center;color:#f2f2f2;font-size:7.500px">B</div>
<!-- mouse cursor -->
<svg class="abs" style="left:901px;top:232.800px" width="8.300" height="12" viewBox="0 0 9 13"><path d="M0.800 0.800v9.400l2.300-2.100 1.700 3.900 1.600-0.700-1.700-3.800h3.200z" fill="#111" stroke="#fff" stroke-width="0.900" stroke-linejoin="round"/></svg>


<!-- browser icons -->
<svg class="abs" style="left:92.2px;top:33.5px" width="7.4" height="11" viewBox="0 0 8 12">
 <path d="M0 2a2 2 0 0 1 2-2h2v4H2a2 2 0 0 1-2-2z" fill="#f24e1e"/>
 <path d="M4 0h2a2 2 0 0 1 0 4H4z" fill="#ff7262"/>
 <path d="M0 6a2 2 0 0 1 2-2h2v4H2a2 2 0 0 1-2-2z" fill="#a259ff"/>
 <circle cx="6" cy="6" r="2" fill="#1abcfe"/>
 <path d="M0 10a2 2 0 0 1 2-2h2v2a2 2 0 0 1-4 0z" fill="#0acf83"/>
</svg>
<svg class="abs" style="left:260px;top:34.2px" width="9" height="9" viewBox="0 0 9 9"><path d="M4.5 0.5v8M0.5 4.5h8" stroke="#3c4043" stroke-width="1.3" fill="none"/></svg>
<svg class="abs" style="left:37.5px;top:58.6px" width="10" height="10" viewBox="0 0 10 10"><path d="M9.3 5H1.2M4.9 1.2L1.1 5l3.8 3.8" stroke="#4a4d51" stroke-width="1.2" fill="none"/></svg>
<svg class="abs" style="left:60px;top:58.6px" width="10" height="10" viewBox="0 0 10 10"><path d="M0.7 5h8.1M5.1 1.2L8.9 5 5.1 8.8" stroke="#b4b7ba" stroke-width="1.2" fill="none"/></svg>
<svg class="abs" style="left:82px;top:58.2px" width="11" height="11" viewBox="0 0 11 11"><path d="M9.2 5.6a3.9 3.9 0 1 1-1.2-2.9" stroke="#4a4d51" stroke-width="1.25" fill="none"/><path d="M9.6 0.8v3.4H6.2z" fill="#4a4d51"/></svg>

<!-- figma toolbar icons -->
<svg class="abs" style="left:36.5px;top:85.5px" width="11" height="10" viewBox="0 0 11 10"><path d="M0 1.2h10.6M0 5h10.6M0 8.8h10.6" stroke="#e6e6e6" stroke-width="1.1" fill="none"/></svg>
<svg class="abs" style="left:64.5px;top:84.5px" width="12" height="12" viewBox="0 0 12 12"><path d="M0.900 1.250L10.100 5.600L4.100 11z" stroke="#d4f1ff" stroke-width="1.1" fill="none" stroke-linejoin="round"/></svg>
<svg class="abs chev" style="left:80.5px;top:89.3px" width="6" height="4" viewBox="0 0 6 4"><path d="M0.7 0.7L3 3l2.3-2.3" stroke="#fff" stroke-width="1.1" fill="none"/></svg>
<svg class="abs" style="left:98.6px;top:84.5px" width="12" height="12" viewBox="0 0 12 12"><path d="M3.3 0.5v11M8.7 0.5v11M0.5 3.3h11M0.5 8.7h11" stroke="#e6e6e6" stroke-width="1.1" fill="none"/></svg>
<svg class="abs chev" style="left:113.6px;top:89.3px" width="6" height="4" viewBox="0 0 6 4"><path d="M0.7 0.7L3 3l2.3-2.3" stroke="#d8d8d8" stroke-width="1.1" fill="none"/></svg>
<svg class="abs" style="left:131.3px;top:84.5px" width="12" height="12" viewBox="0 0 12 12"><rect x="0.7" y="0.7" width="10.6" height="10.6" stroke="#e6e6e6" stroke-width="1.1" fill="none"/></svg>
<svg class="abs chev" style="left:147.3px;top:89.3px" width="6" height="4" viewBox="0 0 6 4"><path d="M0.7 0.7L3 3l2.3-2.3" stroke="#d8d8d8" stroke-width="1.1" fill="none"/></svg>
<svg class="abs" style="left:164.5px;top:84px" width="13" height="13" viewBox="0 0 13 13"><path d="M1 1.2l6.6 1.7 3.6 5.3-3.4 3.4-5.1-3.8z" stroke="#e6e6e6" stroke-width="1" fill="none" stroke-linejoin="round"/><path d="M1 1.2l4.6 4.8" stroke="#e6e6e6" stroke-width="0.9"/><circle cx="6.4" cy="6.8" r="1.2" stroke="#e6e6e6" stroke-width="0.9" fill="none"/></svg>
<svg class="abs chev" style="left:180.7px;top:89.3px" width="6" height="4" viewBox="0 0 6 4"><path d="M0.7 0.7L3 3l2.3-2.3" stroke="#d8d8d8" stroke-width="1.1" fill="none"/></svg>
<svg class="abs" style="left:198.7px;top:84.6px" width="9.6" height="11.4" viewBox="0 0 11 12"><path d="M0.7 2.6V0.7h9.6v1.9M5.5 0.7v10.4M3.4 11.2h4.2" stroke="#e6e6e6" stroke-width="1.1" fill="none"/></svg>
<svg class="abs" style="left:225.5px;top:83.6px" width="13" height="14" viewBox="0 0 13 14"><path d="M3.6 8.2V3.4a0.9 0.9 0 0 1 1.8 0V2a0.9 0.9 0 0 1 1.8 0v1a0.9 0.9 0 0 1 1.8 0v1.4a0.9 0.9 0 0 1 1.8 0v5c0 2.3-1.6 3.9-3.9 3.9-1.8 0-2.9-0.7-3.9-2.2L1 8.300a0.950 0.950 0 0 1 1.600-1z M5.400 3.400v3 M7.200 3v3.400 M9 4.400v2.200" stroke="#e6e6e6" stroke-width="0.95" fill="none" stroke-linejoin="round" stroke-linecap="round"/></svg>
<svg class="abs" style="left:253.4px;top:84.3px" width="13" height="13" viewBox="0 0 13 13"><path d="M1.300 11.700l1.200-2.600a5 5 0 1 1 1.900 1.900z" stroke="#e6e6e6" stroke-width="1.05" fill="none" stroke-linejoin="round"/></svg>

<!-- centre toolbar icons -->
<svg class="abs" style="left:562.4px;top:84px" width="13" height="13" viewBox="0 0 13 13"><g stroke="#e0e0e0" stroke-width="0.85" fill="none"><path d="M6.5 0.7l2.450 2.450-2.450 2.450-2.450-2.450z"/><path d="M6.500 7.400l2.450 2.450-2.450 2.450-2.450-2.450z"/><path d="M3.150 4.050l2.450 2.450-2.450 2.450-2.450-2.450z"/><path d="M9.850 4.050l2.450 2.450-2.450 2.450-2.450-2.450z"/></g></svg>
<svg class="abs" style="left:591px;top:84.500px" width="12" height="12" viewBox="0 0 12 12"><circle cx="6" cy="6" r="5.300" stroke="#e6e6e6" stroke-width="1" fill="none"/><path d="M6 0.700a5.300 5.300 0 0 0 0 10.600a8 8 0 0 0 0-10.600z" fill="#e6e6e6"/></svg>
<svg class="abs" style="left:619.500px;top:84.800px" width="12" height="12" viewBox="0 0 12 12"><rect x="0.300" y="0.300" width="7.400" height="7.400" fill="#d9d9d9"/><rect x="4.200" y="4.200" width="7.400" height="7.400" fill="#ececec"/></svg>
<svg class="abs chev" style="left:635px;top:89.300px" width="6" height="4" viewBox="0 0 6 4"><path d="M0.700 0.700L3 3l2.300-2.300" stroke="#d8d8d8" stroke-width="1.1" fill="none"/></svg>

<!-- right toolbar -->
<div class="abs" style="left:1025.300px;top:81.700px;width:17.400px;height:17.400px;border-radius:50%;background:#1ea54c"></div>
<div class="t b" style="left:1025.300px;top:90.600px;width:17.400px;text-align:center;color:#fff;font-size:8.500px">D</div>
<div class="abs" style="left:1057px;top:80.400px;width:38px;height:20.600px;border-radius:3px;background:#1b9cf5"></div>
<div class="t b" style="left:1057px;top:90.700px;width:38px;text-align:center;color:#fff;font-size:8px">Share</div>
<svg class="abs" style="left:1108px;top:85px" width="10" height="11" viewBox="0 0 10 11"><path d="M1.300 1l7.200 4.500-7.200 4.500z" stroke="#e6e6e6" stroke-width="1" fill="none" stroke-linejoin="round"/></svg>
<div class="t" style="left:1136.300px;top:90.700px;color:#fff;font-size:8px">34%</div>
<svg class="abs chev" style="left:1155.800px;top:89.300px" width="6" height="4" viewBox="0 0 6 4"><path d="M0.700 0.700L3 3l2.300-2.300" stroke="#d8d8d8" stroke-width="1.1" fill="none"/></svg>

<!--ICONS-->

</div></div></div>
<div id="shade"></div>
</body>
</html>
